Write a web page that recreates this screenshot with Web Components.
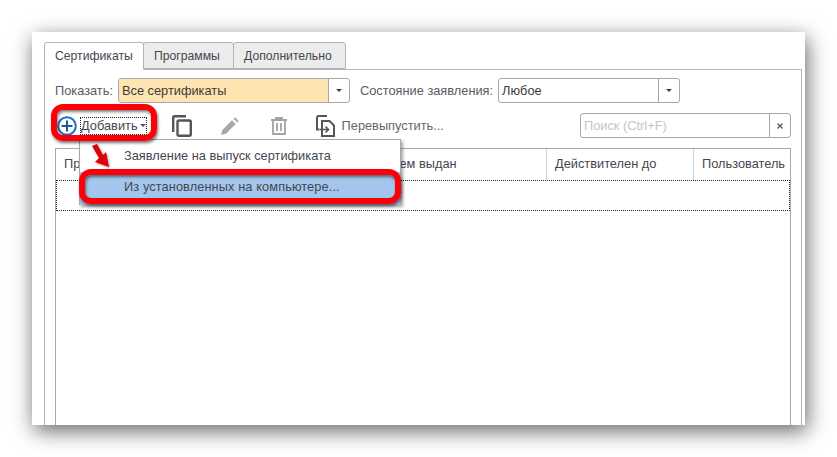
<!DOCTYPE html>
<html>
<head>
<meta charset="utf-8">
<title>Сертификаты</title>
<style>
html, body { margin: 0; height: 100%; background: #fff; overflow: hidden; }
body { font: 12.8px "Liberation Sans", Arial, sans-serif; color: #464650; }
</style>
</head>
<body>
<cert-window>
  <cert-tabs>
    <cert-filter-bar></cert-filter-bar>
    <cert-toolbar></cert-toolbar>
    <cert-table></cert-table>
  </cert-tabs>
  <cert-menu></cert-menu>
  <cert-marks></cert-marks>
</cert-window>

<script>
class CertWindow extends HTMLElement {
    constructor() {
        super();
        this.attachShadow({ mode: "open" }).innerHTML = `
<style>
:host {
    display: flex;
    position: absolute;
    left: 32px;
    top: 32px;
    width: 773px;
    height: 393px;
    box-sizing: border-box;
    padding: 10px 3px 0 12px;
    background: #fff;
    box-shadow: 2px 6px 20px rgba(0,0,0,.6);
}
</style>
<slot></slot>`;
    }
}

class CertTabs extends HTMLElement {
    constructor() {
        super();
        this.attachShadow({ mode: "open" }).innerHTML = `
<style>
:host {
    display: flex;
    flex-direction: column;
    flex: 1;
    min-width: 0;
}
#strip {
    display: flex;
    height: 27px;
    position: relative;
    z-index: 1;
    font-size: 12.2px;
}
.tab {
    box-sizing: border-box;
    height: 27px;
    padding: 6px 10px 0;
    margin-right: -1px;
    border: 1px solid #b4b4b4;
    border-radius: 3px 3px 0 0;
    background: #ececec;
    white-space: nowrap;
}
.tab.on {
    background: #fff;
    border-bottom-color: #fff;
    height: 28px;
}
#panel {
    flex: 1;
    display: flex;
    flex-direction: column;
    border: 1px solid #b4b4b4;
    border-bottom: 0;
    padding: 8px 10px 0 10px;
    min-height: 0;
}
</style>
<div id="strip">
    <div class="tab on" style="width:100px">Сертификаты</div>
    <div class="tab" style="width:91px">Программы</div>
    <div class="tab" style="width:113px">Дополнительно</div>
</div>
<div id="panel"><slot></slot></div>`;
    }
}

class CertField extends HTMLElement {
    constructor() {
        super();
        this.attachShadow({ mode: "open" }).innerHTML = `
<style>
:host {
    display: flex;
    box-sizing: border-box;
    height: 25px;
    border: 1px solid #a8a8a8;
    border-radius: 3px;
    background: #fff;
}
:host([warn]) #text { background: #fee4b0; }
#text {
    flex: 1;
    padding: 0 3px;
    line-height: 23px;
    border-radius: 2px 0 0 2px;
    color: #3c3c3c;
    white-space: nowrap;
    overflow: hidden;
}
:host([hint]) #text { color: #c4c4c8; }
#btn {
    width: 20px;
    border-left: 1px solid #a8a8a8;
    display: flex;
    align-items: center;
    justify-content: center;
}
</style>
<div id="text"><slot></slot></div>
<div id="btn"><slot name="btn"></slot></div>`;
    }
}

const CARET = `<svg slot="btn" width="6" height="3" viewBox="0 0 6 3"><path d="M0 0h6L3 3z" fill="#444"/></svg>`;
const CROSS = `<svg slot="btn" width="6" height="6" viewBox="0 0 6 6"><path d="M.5.5l5 5M5.500.5l-5 5" stroke="#555" stroke-width="1.200" fill="none"/></svg>`;

class CertFilterBar extends HTMLElement {
    constructor() {
        super();
        this.attachShadow({ mode: "open" }).innerHTML = `
<style>
:host {
    display: flex;
    align-items: center;
    height: 25px;
    margin-bottom: 10px;
}
.lab { white-space: nowrap; color: #5a5a64; }
#show { width: 232px; margin-left: 5px; flex: none; }
#state { width: 182px; margin-left: 5px; flex: none; }
#stateLab { margin-left: 10px; }
</style>
<span class="lab">Показать:</span>
<cert-field id="show" warn>Все сертификаты${CARET}</cert-field>
<span class="lab" id="stateLab">Состояние заявления:</span>
<cert-field id="state">Любое${CARET}</cert-field>`;
    }
}

class CertToolbar extends HTMLElement {
    constructor() {
        super();
        this.attachShadow({ mode: "open" }).innerHTML = `
<style>
:host {
    display: flex;
    align-items: center;
    height: 25px;
    margin-bottom: 10px;
}
svg { display: block; flex: none; }
#add { margin-left: 2px; }
#addLabel {
    margin-left: 3px;
    border: 1px dotted #222;
    line-height: 16px;
    white-space: nowrap;
    display: flex;
    align-items: center;
    gap: 2px;
}
#copy { margin-left: 25px; }
#pen { margin-left: 29px; }
#bin { margin-left: 32px; }
#re { margin-left: 29px; }
#reLabel { margin-left: 7px; white-space: nowrap; color: #66666e; }
#search { width: 211px; margin-left: auto; flex: none; }
</style>
<svg id="add" width="20" height="20" viewBox="0 0 20 20"><circle cx="10" cy="10" r="8.800" fill="#fff" stroke="#1a6fc0" stroke-width="2"/><path d="M10 4.500v11M4.500 10h11" stroke="#1a5a9c" stroke-width="2"/></svg>
<div id="addLabel">Добавить<svg width="6" height="3" viewBox="0 0 6 3"><path d="M0 0h6L3 3z" fill="#555"/></svg></div>
<svg id="copy" width="20" height="22" viewBox="0 0 20 22" fill="none" stroke="#555" stroke-width="2.400"><path d="M1.200 17V2.500Q1.200 1.200 2.500 1.200H14"/><rect x="5.500" y="5.500" width="13.300" height="15.300" rx="1.500"/></svg>
<svg id="pen" width="18" height="18" viewBox="0 0 18 18"><path d="M0 18l1.300-5L11 3.300 14.700 7 5 16.700z" fill="#a8a8a8"/><path d="M12.500 1.800L14 .3 17.700 4l-1.500 1.500z" fill="#a8a8a8"/></svg>
<svg id="bin" width="16" height="18" viewBox="0 0 16 18" fill="none" stroke="#a4a4a4" stroke-width="1.800"><path d="M0 3h16M5 3V1h6v2"/><path d="M2 3v14h12V3M6 6v8M10 6v8" /></svg>
<svg id="re" width="19" height="22" viewBox="0 0 19 22" fill="none" stroke="#555" stroke-width="2"><path d="M11 1H2.500Q1 1 1 2.500V14.500h2.500"/><path d="M6 21V6h7.500L18 10.500V21z"/><path d="M4 14.500h8M9.500 11.500l3 3-3 3" stroke-width="1.600"/></svg>
<span id="reLabel">Перевыпустить...</span>
<cert-field id="search" hint>Поиск (Ctrl+F)${CROSS}</cert-field>`;
    }
}

class CertTable extends HTMLElement {
    constructor() {
        super();
        this.attachShadow({ mode: "open" }).innerHTML = `
<style>
:host {
    display: flex;
    flex-direction: column;
    flex: 1;
    border: 1px solid #a8a8a8;
    border-bottom: 0;
    min-height: 0;
}
#head {
    display: grid;
    grid-template-columns: 327px 163px 147px 1fr;
    height: 31px;
    flex: none;
}
#head div {
    padding: 0 8px;
    line-height: 29px;
    border-left: 1px solid #cfcfcf;
    white-space: nowrap;
    overflow: hidden;
}
#head div:first-child { border-left: 0; }
#row {
    height: 31px;
    box-sizing: border-box;
    flex: none;
    border: 1px dotted #222;
}
</style>
<div id="head">
    <div>Пр</div>
    <div>Кем выдан</div>
    <div>Действителен до</div>
    <div>Пользователь</div>
</div>
<div id="row"></div>`;
    }
}

class CertMenu extends HTMLElement {
    constructor() {
        super();
        this.attachShadow({ mode: "open" }).innerHTML = `
<style>
:host {
    position: absolute;
    left: 47px;
    top: 107px;
    width: 322px;
    height: 66px;
    box-sizing: border-box;
    border: 1px solid #a8a8a8;
    background: #fff;
    box-shadow: 2px 2px 3px rgba(0,0,0,.35);
}
div {
    height: 32px;
    line-height: 31px;
    padding-left: 44px;
    white-space: nowrap;
}
#hi { background: #a4c6ec; height: 33px; line-height: 29px; letter-spacing: .09px; }
</style>
<div>Заявление на выпуск сертификата</div>
<div id="hi">Из установленных на компьютере...</div>`;
    }
}

class CertMarks extends HTMLElement {
    constructor() {
        super();
        this.attachShadow({ mode: "open" }).innerHTML = `
<style>
:host { display: contents; }
.ring {
    position: absolute;
    box-sizing: border-box;
    border: 6px solid #fb0009;
    border-radius: 12px;
    box-shadow: 1px 2px 3px rgba(0,0,0,.55), inset 1px 2px 3px rgba(0,0,0,.5);
}
#a { left: 19px; top: 72px; width: 106px; height: 37px; }
#b { left: 47px; top: 137px; width: 322px; height: 35px; }
svg { position: absolute; left: 58px; top: 109px; filter: drop-shadow(1px 1px 1px rgba(0,0,0,.4)); }
</style>
<div class="ring" id="a"></div>
<div class="ring" id="b"></div>
<svg width="24" height="30" viewBox="0 0 24 30"><path d="M2 5l5-2 6 11 3-3 3 15L5 21l4-4z" fill="#e0000a"/></svg>`;
    }
}

customElements.define("cert-window", CertWindow);
customElements.define("cert-tabs", CertTabs);
customElements.define("cert-field", CertField);
customElements.define("cert-filter-bar", CertFilterBar);
customElements.define("cert-toolbar", CertToolbar);
customElements.define("cert-table", CertTable);
customElements.define("cert-menu", CertMenu);
customElements.define("cert-marks", CertMarks);
</script>
</body>
</html>
